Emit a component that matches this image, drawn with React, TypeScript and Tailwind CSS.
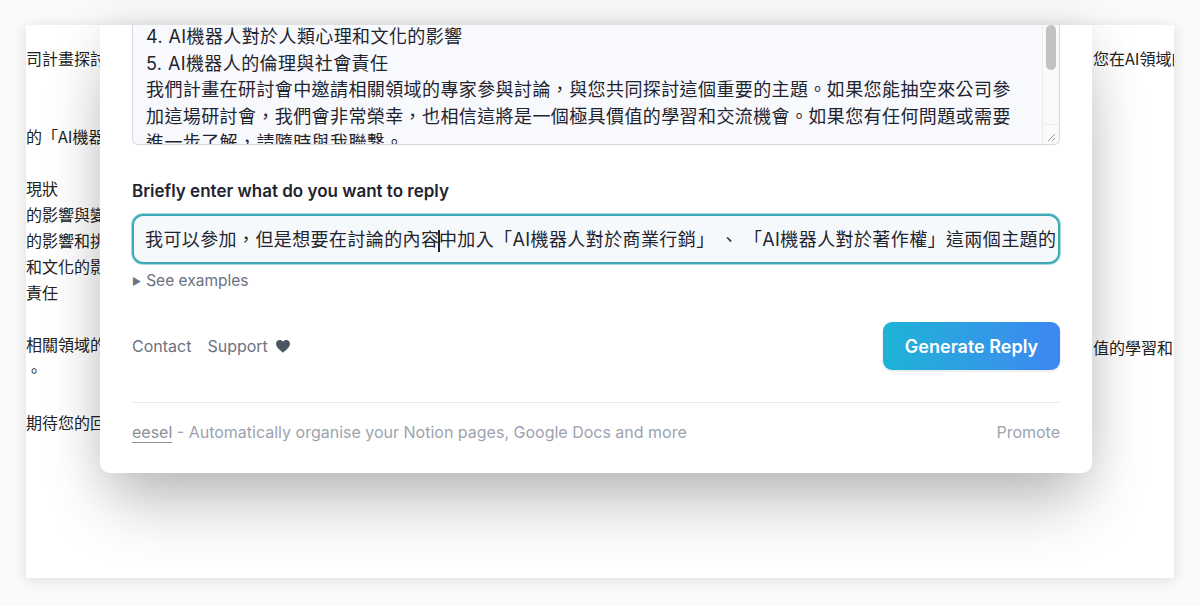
import React from "react";

const cjk = { fontFamily: 'Inter, "Noto Sans CJK TC", sans-serif' };

const leftLines = [
  "司計畫探討人工智慧",
  "",
  "",
  "的「AI機器人",
  "",
  "現狀",
  "的影響與變革",
  "的影響和挑戰",
  "和文化的影響",
  "責任",
  "",
  "相關領域的專家",
  "。",
  "",
  "期待您的回覆",
];

const mailLines = [
  "4. AI機器人對於人類心理和文化的影響",
  "5. AI機器人的倫理與社會責任",
  "我們計畫在研討會中邀請相關領域的專家參與討論，與您共同探討這個重要的主題。如果您能抽空來公司參",
  "加這場研討會，我們會非常榮幸，也相信這將是一個極具價值的學習和交流機會。如果您有任何問題或需要",
  "進一步了解，請隨時與我聯繫。",
];

const HeartIcon = () => (
  <svg width="14" height="13" viewBox="0 0 24 22" className="fill-[#4b5563]">
    <path d="M12 21.5 10.3 20C4.2 14.5 0 10.8 0 6.5 0 2.9 2.8 0 6.4 0c2.1 0 4.1 1 5.6 2.6C13.5 1 15.5 0 17.6 0 21.2 0 24 2.9 24 6.5c0 4.3-4.2 8-10.3 13.5L12 21.5z" />
  </svg>
);

const ReplyPopup = () => (
  <div
    className="absolute left-[74px] top-0 w-[992px] h-[448px] bg-white rounded-b-[10px] px-8 shadow-[0_40px_60px_-10px_rgba(0,0,0,0.24),0_0_50px_rgba(0,0,0,0.1)]"
    style={cjk}
  >
    {/* scrolled textarea with the received mail */}
    <div className="relative h-[120px] bg-[#f7f9fc] border border-t-0 border-[#d4d7dd] rounded-b-[6px] overflow-hidden">
      <div className="-mt-[1px] pl-[13px] text-[18px] leading-[26.5px] tracking-[0.4px] text-[#1f2430]">
        {mailLines.map((l, i) => (
          <div key={i} className="whitespace-nowrap">
            {l}
          </div>
        ))}
      </div>
      <div className="absolute right-0 top-0 bottom-0 w-[17px] bg-[#fafafa] border-l border-[#ececec] flex flex-col">
        <div className="mx-auto w-[10px] h-[45px] rounded-full bg-[#c2c2c2]" />
        <div className="mt-auto h-[20px] border-t border-[#ececec] relative">
          <svg width="10" height="10" viewBox="0 0 10 10" className="absolute right-[3px] bottom-[2px] stroke-[#9a9a9a]">
            <path d="M9 2 2 9M9 6 6 9" strokeWidth="1" />
          </svg>
        </div>
      </div>
    </div>

    <div className="mt-[34px] text-[17px] font-semibold text-[#1f2430] leading-[24px]">
      Briefly enter what do you want to reply
    </div>

    <div className="mt-[11px] h-[50px] rounded-[11px] border-2 border-[#3ea8b7] bg-[#f6f9fb] shadow-[0_0_0_1px_#a8dce3] flex items-center pl-[11px] overflow-hidden">
      <span className="whitespace-nowrap text-[18px] tracking-[0.4px] text-[#1f2430]">
        我可以參加，但是想要在討論的內容
        <span className="inline-block w-[1.5px] h-[22px] bg-[#1f2430] align-middle -mx-[1px]" />
        中加入「AI機器人對於商業行銷」 、 「AI機器人對於著作權」這兩個主題的
      </span>
    </div>

    <div className="mt-[6px] flex items-center gap-[5px] text-[15.5px] text-[#6b7280] leading-[22px]">
      <span className="text-[10px] text-[#6b7280]">▶</span>
      <span>See examples</span>
    </div>

    <div className="mt-[30px] flex items-center justify-between">
      <div className="flex items-center text-[16px] text-[#6b7280]">
        <span>Contact</span>
        <span className="ml-[16px]">Support</span>
        <span className="ml-[8px] mt-[1px]">
          <HeartIcon />
        </span>
      </div>
      <button className="w-[177px] h-[48px] rounded-[9px] bg-gradient-to-r from-[#1cb3d6] to-[#3d86f2] text-white text-[18px] font-semibold shadow-[0_1px_3px_rgba(0,0,0,0.12)]">
        Generate Reply
      </button>
    </div>

    <div className="mt-[32px] border-t border-[#e8e9eb]" />

    <div className="mt-[17px] flex items-center justify-between text-[16px] text-[#9ca3af]">
      <div>
        <span className="underline underline-offset-[4px] text-[#8b8f96]">eesel</span>
        <span> - Automatically organise your Notion pages, Google Docs and more</span>
      </div>
      <span>Promote</span>
    </div>
  </div>
);

export default function App() {
  return (
    <div className="w-[1200px] h-[606px] bg-[#fafafa] pt-[25px] px-[26px] overflow-hidden">
      <div className="relative h-[553px] bg-white shadow-[0_2px_14px_rgba(0,0,0,0.12)]">
        <div
          className="flex justify-between text-[16px] leading-[26px] text-[#222]"
          style={{ fontFamily: '"Noto Sans CJK TC", sans-serif' }}
        >
          <div className="w-[74px] pt-[20px] overflow-hidden whitespace-nowrap">
            {leftLines.map((l, i) => (
              <div key={i} className="h-[26px]">
                {l}
              </div>
            ))}
          </div>
          <div className="w-[81px] pt-[20px] overflow-hidden whitespace-nowrap">
            <div className="h-[26px]">您在AI領域的專業</div>
            {Array.from({ length: 10 }).map((_, i) => (
              <div key={i} className="h-[26px]" />
            ))}
            <div className="h-[26px] mt-[3px]">值的學習和交流</div>
          </div>
        </div>
        <ReplyPopup />
      </div>
    </div>
  );
}
